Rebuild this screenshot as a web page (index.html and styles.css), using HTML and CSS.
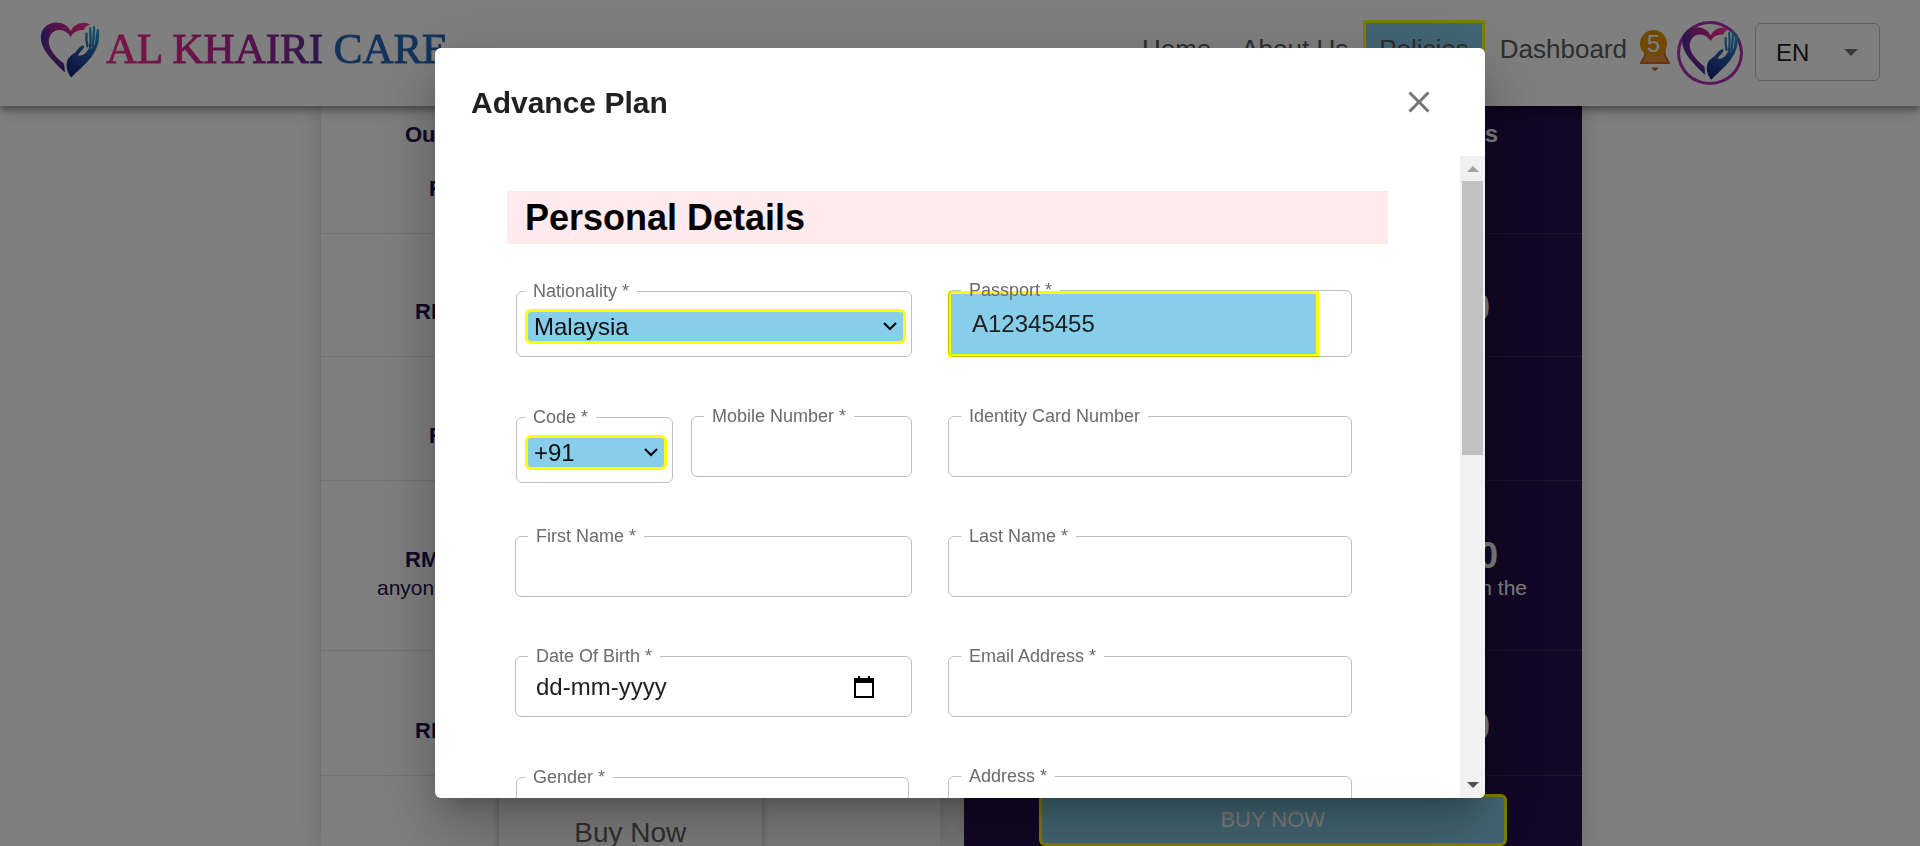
FILE: index.html
```html
<!DOCTYPE html>
<html lang="en">
<head>
<meta charset="utf-8">
<title>Al Khairi Care</title>
<link rel="stylesheet" href="styles.css">
</head>
<body>
<svg class="defs" aria-hidden="true">
  <defs>
    <linearGradient id="heart-fill" x1="0" y1="0.3" x2="1" y2="0">
      <stop offset="0" stop-color="#3a2a9c"/>
      <stop offset="0.3" stop-color="#a0288f"/>
      <stop offset="0.75" stop-color="#e82a8b"/>
      <stop offset="1" stop-color="#f0409a"/>
    </linearGradient>
    <linearGradient id="tail-fill" x1="0" y1="0" x2="0" y2="1">
      <stop offset="0" stop-color="#e82a8b" stop-opacity="0"/>
      <stop offset="1" stop-color="#1e2a8c"/>
    </linearGradient>
    <linearGradient id="hand-fill" gradientUnits="userSpaceOnUse" x1="120" y1="200" x2="205" y2="60">
      <stop offset="0" stop-color="#1d2078"/>
      <stop offset="0.5" stop-color="#2456a8"/>
      <stop offset="1" stop-color="#1fa6cf"/>
    </linearGradient>
    <symbol id="heart-hand" viewBox="30 32 182 172">
      <path fill="url(#heart-fill)" d="M123 62C109 28 50 24 34 68C24 112 68 150 105 187L103 162C84 146 52 118 57 88C62 54 104 48 123 80C132 64 146 58 163 59C166 51 172 46 182 42C164 30 134 38 123 62Z"/>
      <path fill="url(#tail-fill)" d="M33 80C30 118 70 152 105 187L103 162C84 146 52 118 57 88Z"/>
      <path fill="url(#hand-fill)" d="M125 203C114 190 109 176 111 160C113 138 130 136 142 121C151 109 161 103 164 108C166 115 150 126 145 136C160 138 172 128 178 114C186 116 192 112 197 98L201 62C202 54 208 54 209 62C216 130 162 164 125 203Z"/>
      <g fill="none" stroke="url(#hand-fill)" stroke-linecap="round" stroke-width="7">
        <path d="M174 108Q169 92 171 70"/>
        <path d="M182 112Q185 84 182 54"/>
        <path d="M189 108Q194 84 194 50"/>
      </g>
    </symbol>
  </defs>
</svg>

<header class="topbar">
  <a class="brand" href="#">
    <svg class="brand-mark" aria-hidden="true"><use href="#heart-hand"/></svg>
    <span class="brand-name">AL KHAIRI CARE</span>
  </a>
  <nav class="nav">
    <a href="#">Home</a>
    <a href="#">About Us</a>
    <a class="marked" href="#">Policies</a>
    <a href="#">Dashboard</a>
  </nav>
  <button class="bell" type="button" aria-label="Notifications">
    <svg viewBox="0 0 30 42" aria-hidden="true">
      <path d="M6 14h18l1 10 4 7H1l4-7z" fill="#e89040" stroke="#d9661f" stroke-width="2"/>
      <path d="M12 36h6l-3 3z" fill="#d9661f" stroke="#d9661f"/>
    </svg>
    <span class="badge">5</span>
  </button>
  <a class="avatar" href="#" aria-label="Profile"><svg aria-hidden="true"><use href="#heart-hand"/></svg></a>
  <div class="lang">
    <select aria-label="Language"><option>EN</option></select>
    <svg viewBox="0 0 14 7" aria-hidden="true"><path d="M0 0h14L7 7z" fill="#757575"/></svg>
  </div>
</header>

<main class="page">
  <div class="plans">
    <section class="plan">
      <div class="row r1"><strong class="head">Ou</strong><strong class="in-far">RM</strong></div>
      <div class="row r2"><strong class="in-mid">RM</strong></div>
      <div class="row r3"><strong class="in-far">RM</strong></div>
      <div class="row r4"><strong class="in-near">RM</strong><span class="note">anyone</span></div>
      <div class="row r5"><strong class="in-mid">RM</strong></div>
      <div class="action"><button class="buy-plain" type="button">Buy Now</button></div>
    </section>
    <section class="plan plan-dark">
      <div class="row r1"><strong class="head">s</strong></div>
      <div class="row r2"><strong class="price out-mid">0</strong></div>
      <div class="row r3"></div>
      <div class="row r4"><strong class="price out-near">0</strong><span class="note">n the</span></div>
      <div class="row r5"><strong class="price out-mid">0</strong></div>
      <div class="action"><button class="buy-marked" type="button">BUY NOW</button></div>
    </section>
  </div>
</main>

<div class="overlay">
  <div class="dialog" role="dialog" aria-modal="true" aria-labelledby="dialog-title">
    <div class="dialog-head">
      <h2 id="dialog-title">Advance Plan</h2>
      <button class="close" type="button" aria-label="Close">
        <svg viewBox="0 0 24 24" aria-hidden="true"><path fill="#757575" d="M19 6.41 17.59 5 12 10.59 6.41 5 5 6.41 10.59 12 5 17.59 6.41 19 12 13.41 17.59 19 19 17.59 13.41 12z"/></svg>
      </button>
    </div>
    <div class="dialog-body">
      <form class="pane">
        <h3>Personal Details</h3>
        <div class="fields">
          <div class="field field-select">
            <select id="nationality"><option>Malaysia</option></select>
            <svg class="chevron" viewBox="0 0 14 9" aria-hidden="true"><path d="M1 1l6 6 6-6"/></svg>
            <fieldset><legend><label for="nationality">Nationality *</label></legend></fieldset>
          </div>
          <div class="field field-marked">
            <input id="passport" type="text" value="A12345455">
            <fieldset><legend><label for="passport">Passport *</label></legend></fieldset>
          </div>
          <div class="phone">
            <div class="field field-select">
              <select id="code"><option>+91</option></select>
              <svg class="chevron" viewBox="0 0 14 9" aria-hidden="true"><path d="M1 1l6 6 6-6"/></svg>
              <fieldset><legend><label for="code">Code *</label></legend></fieldset>
            </div>
            <div class="field">
              <input id="mobile" type="text">
              <fieldset><legend><label for="mobile">Mobile Number *</label></legend></fieldset>
            </div>
          </div>
          <div class="field">
            <input id="identity" type="text">
            <fieldset><legend><label for="identity">Identity Card Number</label></legend></fieldset>
          </div>
          <div class="field">
            <input id="first-name" type="text">
            <fieldset><legend><label for="first-name">First Name *</label></legend></fieldset>
          </div>
          <div class="field">
            <input id="last-name" type="text">
            <fieldset><legend><label for="last-name">Last Name *</label></legend></fieldset>
          </div>
          <div class="field">
            <input id="birth" type="text" placeholder="dd-mm-yyyy">
            <button class="calendar" type="button" aria-label="Pick a date">
              <svg viewBox="0 0 20 22" aria-hidden="true"><path d="M1 3h18v18H1z" fill="none" stroke="#000" stroke-width="2"/><path d="M1 2h18v5H1zM4 0h2v3H4zM14 0h2v3h-2z"/></svg>
            </button>
            <fieldset><legend><label for="birth">Date Of Birth *</label></legend></fieldset>
          </div>
          <div class="field">
            <input id="email" type="email">
            <fieldset><legend><label for="email">Email Address *</label></legend></fieldset>
          </div>
          <div class="field field-select field-plain">
            <select id="gender"><option></option></select>
            <fieldset><legend><label for="gender">Gender *</label></legend></fieldset>
          </div>
          <div class="field">
            <input id="address" type="text">
            <fieldset><legend><label for="address">Address *</label></legend></fieldset>
          </div>
        </div>
      </form>
      <div class="scrollbar" aria-hidden="true">
        <svg viewBox="0 0 12 6"><path d="M6 0l6 6H0z" fill="#a3a3a3"/></svg>
        <div class="thumb"></div>
        <svg viewBox="0 0 12 6"><path d="M0 0h12L6 6z" fill="#505050"/></svg>
      </div>
    </div>
  </div>
</div>
</body>
</html>
```

FILE: styles.css
```css
* { box-sizing: border-box; }

body {
  display: flex;
  flex-direction: column;
  margin: 0;
  height: 100vh;
  overflow: hidden;
  background: #fff;
  color: #212121;
  font-family: "Liberation Sans", Arial, sans-serif;
  font-size: 24px;
}

button, input, select { font: inherit; color: inherit; margin: 0; }
a { color: inherit; text-decoration: none; }
.defs { position: absolute; width: 0; height: 0; }

/* Top bar */
.topbar {
  position: relative;
  z-index: 1;
  flex: none;
  display: flex;
  align-items: center;
  height: 106px;
  padding: 0 40px;
  background: #fff;
  box-shadow: 0 3px 6px rgba(0, 0, 0, .3), 0 6px 12px rgba(0, 0, 0, .2);
}
.brand { display: flex; align-items: center; gap: 6px; margin: 0 auto 8px 0; }
.brand-mark { width: 60px; height: 57px; }
.brand-name {
  font-family: "Liberation Serif", "Times New Roman", serif;
  font-size: 43px;
  line-height: 56px;
  white-space: nowrap;
  color: transparent;
  background: linear-gradient(90deg, #f0308c 0%, #e0288c 18%, #a02898 45%, #5a2c98 64%, #2a66b4 67%, #2468bc 100%);
  background-clip: text;
  -webkit-background-clip: text;
  -webkit-text-stroke: 1px transparent;
}
.nav { display: flex; align-items: center; margin-bottom: 8px; font-size: 26px; color: #5a5a5a; }
.nav a { padding: 0 15px; line-height: 52px; }
.nav .marked { padding: 0 13px; border: 3px solid #ff0; background: #87ceeb; }
.nav a:last-child { padding-right: 13px; }
.bell { position: relative; width: 30px; height: 46px; padding: 0; border: 0; background: none; }
.bell svg { display: block; width: 30px; height: 42px; }
.badge {
  position: absolute;
  top: 0;
  left: 0;
  width: 27px;
  border-radius: 14px;
  background: #e09000;
  color: #fff;
  line-height: 27px;
  text-align: center;
}
.avatar {
  display: flex;
  align-items: center;
  justify-content: center;
  width: 66px;
  height: 64px;
  margin: 0 12px 0 7px;
  border: 3px solid #b030b8;
  border-radius: 50%;
}
.avatar svg { width: 58px; height: 54px; }
.lang { position: relative; width: 125px; margin-bottom: 2px; }
.lang select {
  width: 100%;
  height: 58px;
  padding: 0 20px;
  border: 1px solid #bdbdbd;
  border-radius: 6px;
  background: none;
  appearance: none;
}
.lang svg { position: absolute; top: 26px; right: 22px; width: 14px; height: 7px; }

/* Plans behind the dialog */
.page { flex: 1; min-height: 0; padding: 0 41px 0 24px; }
.plans {
  display: grid;
  grid-template-columns: 1fr 1fr;
  gap: 24px;
  max-width: 1261px;
  height: 100%;
  margin: 0 auto;
}
.plan {
  overflow: hidden;
  background: #fff;
  box-shadow: 0 0 24px rgba(0, 0, 0, .2);
  color: #240e4c;
  font-size: 22px;
  line-height: 28px;
}
.row { display: flex; flex-direction: column; justify-content: flex-end; border-bottom: 1px solid rgba(128, 128, 128, .2); }
.r1 { height: 128px; padding-bottom: 30px; }
.r2 { height: 123px; padding-bottom: 30px; }
.r3 { height: 124px; padding-bottom: 30px; }
.r4 { height: 170px; padding-bottom: 48px; }
.r5 { height: 125px; padding-bottom: 30px; }
.plan .head { padding-left: 84px; margin-bottom: 26px; }
.in-far { padding-left: 108px; }
.in-mid { padding-left: 94px; }
.in-near { padding-left: 84px; }
.note { padding-left: 56px; font-size: 21px; }
.plan-dark { background: #240e4c; color: #fff; text-align: right; }
.plan-dark .r1 { justify-content: flex-start; padding-top: 14px; }
.plan-dark .head { padding: 0 84px 0 0; font-size: 24px; }
.price { font-size: 36px; line-height: 36px; }
.out-mid { padding-right: 92px; }
.out-near { padding-right: 84px; }
.plan-dark .note { padding-right: 55px; }
.action { display: flex; justify-content: center; padding-top: 18px; }
.buy-plain {
  flex: none;
  width: 263px;
  height: 78px;
  border: 0;
  border-radius: 6px;
  background: #fff;
  box-shadow: 0 1px 8px rgba(0, 0, 0, .3);
  color: #616161;
  font-size: 28px;
}
.buy-marked {
  width: 468px;
  height: 52px;
  border: 3px solid #ff0;
  border-radius: 6px;
  background: #87ceeb;
  color: #fff;
  line-height: 44px;
  padding: 0;
}

/* Dialog */
.overlay {
  position: fixed;
  inset: 0;
  z-index: 2;
  display: flex;
  justify-content: center;
  padding: 48px;
  background: rgba(0, 0, 0, .5);
}
.dialog {
  display: flex;
  flex-direction: column;
  width: 1050px;
  border-radius: 6px;
  overflow: hidden;
  background: #fff;
  box-shadow: 0 16px 22px -10px rgba(0, 0, 0, .2), 0 36px 57px 4px rgba(0, 0, 0, .14), 0 14px 69px 12px rgba(0, 0, 0, .12);
}
.dialog-head { flex: none; display: flex; align-items: center; justify-content: space-between; height: 108px; padding: 0 48px 0 36px; }
h2 { margin: 0; padding-top: 2px; font-size: 30px; line-height: 40px; }
.close { padding: 0; border: 0; background: none; line-height: 0; }
.close svg { width: 36px; height: 36px; }
.dialog-body { display: flex; flex: 1; min-height: 0; }
.pane { flex: 1; min-width: 0; padding: 35px 72px 0; overflow: hidden; }
h3 { margin: 0 0 47px; padding: 0 18px; background: #ffebee; color: #000; font-size: 36px; line-height: 53px; }

.fields {
  display: grid;
  grid-template-columns: minmax(0, 397fr) minmax(0, 404fr);
  grid-template-rows: 126px;
  grid-auto-rows: 120px;
  column-gap: 36px;
  align-items: start;
  padding: 0 36px 0 8px;
}
.phone {
  display: grid;
  grid-template-columns: minmax(0, 158fr) minmax(0, 221fr);
  column-gap: 18px;
  align-items: start;
}
.field { position: relative; display: flex; height: 60px; }
.field input { flex: 1; min-width: 0; padding: 0 21px; border: 0; background: none; outline: 0; }
.field input::placeholder { color: #212121; opacity: 1; }
.field fieldset {
  position: absolute;
  inset: -9px 0 0;
  min-width: 0;
  margin: 0;
  padding: 0 0 0 12px;
  border: 1px solid rgba(0, 0, 0, .25);
  border-radius: 6px;
  pointer-events: none;
}
.field legend { padding: 0 8px; color: #6b6b6b; font-size: 18px; line-height: 17px; white-space: nowrap; }
.field-select { height: 65px; margin: 1px 0 0 1px; padding: 17px 6px 13px 9px; }
.field-select fieldset { padding-left: 8px; }
.field-select select {
  width: 100%;
  min-width: 0;
  padding: 0 6px;
  border: 3px solid #ff0;
  border-radius: 6px;
  background: #87ceeb;
  color: #111;
  appearance: none;
}
.field-plain { margin-right: 3px; }
.field-plain select { border: 0; background: none; }
.chevron { position: absolute; top: 30px; right: 15px; width: 14px; height: 9px; fill: none; stroke: #000; stroke-width: 2; pointer-events: none; }
.field-marked { height: 66px; padding-right: 33px; }
.field-marked input { border: 3px solid #ff0; background: #87ceeb; }
.calendar { align-self: center; margin-right: 38px; padding: 0; border: 0; background: none; line-height: 0; }
.calendar svg { width: 20px; height: 22px; }

.scrollbar { flex: none; display: flex; flex-direction: column; align-items: center; width: 25px; padding: 10px 0; background: #f1f1f1; }
.scrollbar svg { flex: none; width: 12px; height: 6px; }
.thumb { width: 21px; height: 44%; margin: 9px 0 auto; background: #c1c1c1; }
```
